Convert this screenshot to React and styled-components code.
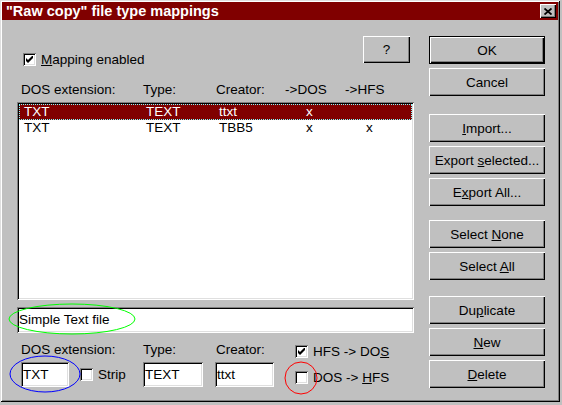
import React from 'react';
import styled, { createGlobalStyle, css } from 'styled-components';

const GlobalStyle = createGlobalStyle`
  html, body {
    margin: 0;
    padding: 0;
    background: #c0c0c0;
  }
  body {
    font-family: "Liberation Sans", Arial, sans-serif;
    font-size: 13.5px;
    color: #000;
  }
`;

const raised = css`
  box-shadow: inset 1px 1px #fff, inset -1px -1px #000, inset -2px -2px #808080;
`;
const sunken = css`
  box-shadow: inset 1px 1px #808080, inset -1px -1px #fff, inset 2px 2px #000,
    inset -2px -2px #dfdfdf;
`;

const SWindow = styled.div`
  position: relative;
  width: 560px;
  height: 402px;
  box-sizing: border-box;
  padding: 2px;
  background: #c0c0c0;
  box-shadow: inset 1px 1px #dfdfdf, inset -1px -1px #000, inset 2px 2px #fff,
    inset -2px -2px #808080;
`;
const STitleBar = styled.div`
  height: 18px;
  background: #800000;
  color: #fff;
  font-weight: bold;
  font-size: 14.5px;
  display: flex;
  align-items: center;
  justify-content: space-between;
  padding: 0 2px 0 4px;
`;
const SCloseButton = styled.div`
  width: 16px;
  height: 14px;
  background: #c0c0c0;
  display: flex;
  align-items: center;
  justify-content: center;
  ${raised}
`;
const SBody = styled.div`
  display: grid;
  grid-template-columns: 397px 116px;
  column-gap: 15px;
  padding: 16px 0 0 15px;
`;
const SLeft = styled.div`
  display: flex;
  flex-direction: column;
`;
const STopRow = styled.div`
  display: flex;
  justify-content: space-between;
  height: 28px;
`;
const SCheckRow = styled.label`
  display: flex;
  align-items: center;
  gap: 5px;
  height: 13px;
  line-height: 16px;
  margin: ${(p) => p.$margin || '0'};
`;
const SCheckBox = styled.span`
  width: 13px;
  height: 13px;
  background: #fff;
  display: flex;
  align-items: center;
  justify-content: center;
  ${sunken}
`;
const SButton = styled.div`
  box-sizing: border-box;
  width: ${(p) => p.$width || '116px'};
  height: ${(p) => p.$height || '28px'};
  background: #c0c0c0;
  display: flex;
  align-items: center;
  justify-content: center;
  margin-right: ${(p) => p.$mr || '0'};
  ${raised}
  ${(p) =>
    p.$default &&
    css`
      border: 1px solid #000;
    `}
`;
const SColumns = styled.div`
  display: grid;
  grid-template-columns: 122px 73px 69px 60px 1fr;
  height: 16px;
  line-height: 16px;
  white-space: nowrap;
`;
const SHeader = styled(SColumns)`
  margin-top: 18px;
  padding-left: 4px;
`;
const SList = styled.div`
  margin-top: 4px;
  height: 198px;
  box-sizing: border-box;
  padding: 2px;
  background: #fff;
  ${sunken}
`;
const SRow = styled(SColumns)`
  padding-left: 5px;
  ${(p) =>
    p.$selected &&
    css`
      background: #800000;
      color: #fff;
      outline: 1px dotted #7fffff;
      outline-offset: -1px;
    `}
`;
const SMark = styled.span`
  padding-left: 18px;
`;
const SField = styled.div`
  box-sizing: border-box;
  width: ${(p) => p.$width || '100%'};
  height: ${(p) => p.$height || '25px'};
  line-height: ${(p) => p.$height || '25px'};
  padding: 0 2px;
  background: #fff;
  white-space: nowrap;
  ${sunken}
`;
const SDesc = styled(SField)`
  margin-top: 7px;
`;
const SBottom = styled.div`
  display: flex;
  margin-top: 9px;
  padding-left: 4px;
`;
const SGroup = styled.div`
  width: ${(p) => p.$width};
  display: flex;
  flex-direction: column;
`;
const SLabel = styled.div`
  height: 16px;
  line-height: 16px;
  margin-bottom: 4px;
  padding-left: ${(p) => p.$pl || '0'};
  white-space: nowrap;
`;
const SInline = styled.div`
  display: flex;
  align-items: center;
`;
const SChecks = styled.div`
  display: flex;
  flex-direction: column;
  gap: 13px;
  padding-top: 3px;
`;
const SRight = styled.div`
  display: flex;
  flex-direction: column;
`;
const SButtonGroup = styled.div`
  display: flex;
  flex-direction: column;
  gap: 4px;
  margin-top: ${(p) => p.$mt || '0'};
`;
const SOverlay = styled.svg`
  position: absolute;
  left: 0;
  top: 0;
  pointer-events: none;
`;

const Check = () => (
  <svg width="7" height="7" viewBox="0 0 7 7">
    <polygon points="0,2 2,4 7,-1 7,2 2,7 0,5" fill="#000" />
  </svg>
);

const CheckBox = ({ checked, children, margin }) => (
  <SCheckRow $margin={margin}>
    <SCheckBox>{checked && <Check />}</SCheckBox>
    <span>{children}</span>
  </SCheckRow>
);

const rows = [
  { ext: 'TXT', type: 'TEXT', creator: 'ttxt', toDos: 'x', toHfs: '', selected: true },
  { ext: 'TXT', type: 'TEXT', creator: 'TBB5', toDos: 'x', toHfs: 'x' },
];

const App = () => (
  <>
    <GlobalStyle />
    <SWindow>
      <STitleBar>
        <span>"Raw copy" file type mappings</span>
        <SCloseButton>
          <svg width="8" height="7" viewBox="0 0 8 7">
            <path d="M0.5 0.5 L7.5 6.5 M7.5 0.5 L0.5 6.5" stroke="#000" strokeWidth="1.8" />
          </svg>
        </SCloseButton>
      </STitleBar>
      <SBody>
        <SLeft>
          <STopRow>
            <CheckBox checked margin="17px 0 0 6px">
              <u>M</u>apping enabled
            </CheckBox>
            <SButton $width="47px" $height="27px" $mr="4px">?</SButton>
          </STopRow>
          <SHeader>
            <span>DOS extension:</span>
            <span>Type:</span>
            <span>Creator:</span>
            <span>-&gt;DOS</span>
            <span>-&gt;HFS</span>
          </SHeader>
          <SList>
            {rows.map((r, i) => (
              <SRow key={i} $selected={r.selected}>
                <span>{r.ext}</span>
                <span>{r.type}</span>
                <span>{r.creator}</span>
                <SMark>{r.toDos}</SMark>
                <SMark>{r.toHfs}</SMark>
              </SRow>
            ))}
          </SList>
          <SDesc $height="26px">Simple Text file</SDesc>
          <SBottom>
            <SGroup $width="122px">
              <SLabel>DOS extension:</SLabel>
              <SInline>
                <SField $width="48px">TXT</SField>
                <CheckBox margin="0 0 0 11px">Strip</CheckBox>
              </SInline>
            </SGroup>
            <SGroup $width="72px">
              <SLabel>Type:</SLabel>
              <SField $width="60px">TEXT</SField>
            </SGroup>
            <SGroup $width="80px">
              <SLabel $pl="1px">Creator:</SLabel>
              <SField $width="59px">ttxt</SField>
            </SGroup>
            <SChecks>
              <CheckBox checked>
                HFS -&gt; DO<u>S</u>
              </CheckBox>
              <CheckBox>
                DOS -&gt; <u>H</u>FS
              </CheckBox>
            </SChecks>
          </SBottom>
        </SLeft>
        <SRight>
          <SButtonGroup>
            <SButton $default>OK</SButton>
            <SButton>Cancel</SButton>
          </SButtonGroup>
          <SButtonGroup $mt="18px">
            <SButton>
              <span><u>I</u>mport...</span>
            </SButton>
            <SButton>
              <span>Export <u>s</u>elected...</span>
            </SButton>
            <SButton>
              <span>E<u>x</u>port All...</span>
            </SButton>
          </SButtonGroup>
          <SButtonGroup $mt="14px">
            <SButton>
              <span>Select <u>N</u>one</span>
            </SButton>
            <SButton>
              <span>Select <u>A</u>ll</span>
            </SButton>
          </SButtonGroup>
          <SButtonGroup $mt="16px">
            <SButton>
              <span>Du<u>p</u>licate</span>
            </SButton>
            <SButton>
              <span><u>N</u>ew</span>
            </SButton>
            <SButton>
              <span><u>D</u>elete</span>
            </SButton>
          </SButtonGroup>
        </SRight>
      </SBody>
      <SOverlay width="560" height="402">
        <ellipse cx="72" cy="319" rx="63" ry="15" fill="none" stroke="#00ff00" strokeWidth="1" />
        <ellipse cx="45" cy="374" rx="35" ry="18" fill="none" stroke="#0000ff" strokeWidth="1" />
        <circle cx="301" cy="378" r="16" fill="none" stroke="#ff0000" strokeWidth="1" />
      </SOverlay>
    </SWindow>
  </>
);

export default App;
